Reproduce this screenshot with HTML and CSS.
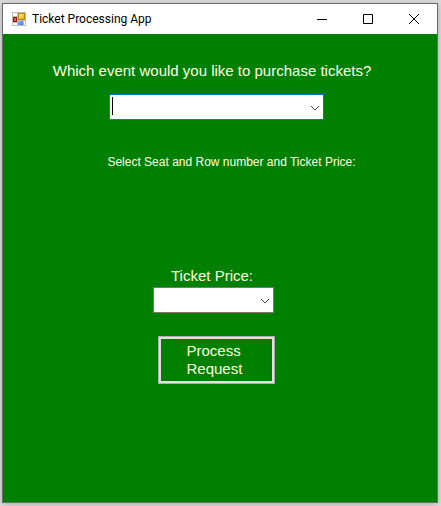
FILE: index.html
```html
<!DOCTYPE html>
<html lang="en">
<head>
<meta charset="utf-8">
<title>Ticket Processing App</title>
<link rel="stylesheet" href="styles.css">
</head>
<body>
<div class="window">
  <header class="titlebar">
    <svg class="app-icon" viewBox="0 0 14 14" shape-rendering="crispEdges" aria-hidden="true">
      <defs>
        <linearGradient id="gold" x1="0" y1="0" x2="1" y2="1"><stop offset="0" stop-color="#fff0a0"/><stop offset="1" stop-color="#e8a800"/></linearGradient>
        <linearGradient id="blue" x1="0" y1="0" x2="1" y2="1"><stop offset="0" stop-color="#8dbcff"/><stop offset="1" stop-color="#3a78dc"/></linearGradient>
      </defs>
      <path fill="#bdbdbd" d="M0 0h14v14H0z"/>
      <path fill="#fff" d="M1 1h4v3H1zM1 11h4v2H1zM12 9h1v4h-1zM6 9h5v1H6z"/>
      <path fill="#b8860b" d="M6 1h7v7H6z"/>
      <path fill="url(#gold)" d="M7 2h5v5H7z"/>
      <path fill="#a01010" d="M1 5h4v5H1z"/>
      <path fill="#e05a4a" d="M2 6h2v3H2z"/>
      <path fill="url(#blue)" d="M6 9h5v4H6z"/>
    </svg>
    <h1 class="title">Ticket Processing App</h1>
    <div class="controls">
      <button class="control" type="button" aria-label="Minimize"><svg viewBox="0 0 10 10" aria-hidden="true"><path d="M0 5.5h10"/></svg></button>
      <button class="control" type="button" aria-label="Maximize"><svg viewBox="0 0 10 10" aria-hidden="true"><path d="M.5.5h9v9h-9z"/></svg></button>
      <button class="control" type="button" aria-label="Close"><svg viewBox="0 0 10 10" aria-hidden="true"><path d="M0 0l10 10M10 0L0 10"/></svg></button>
    </div>
  </header>
  <form class="form">
    <label class="label event-label" for="event">Which event would you like to purchase tickets?</label>
    <div class="combo combo-event">
      <select id="event"><option></option></select>
      <span class="caret"></span>
      <svg class="chevron" viewBox="0 0 10 6" aria-hidden="true"><path d="M1 1l4 4 4-4"/></svg>
    </div>
    <p class="hint">Select Seat and Row number and Ticket Price:</p>
    <label class="label price-label" for="price">Ticket Price:</label>
    <div class="combo combo-price">
      <select id="price"><option></option></select>
      <svg class="chevron" viewBox="0 0 10 6" aria-hidden="true"><path d="M1 1l4 4 4-4"/></svg>
    </div>
    <button class="submit" type="button">Process Request</button>
  </form>
</div>
</body>
</html>
```
FILE: styles.css
```css
* {
  box-sizing: border-box;
}

body {
  display: flex;
  min-height: 100vh;
  margin: 0;
  padding: 3px 3px 3px 2px;
  background: #dcdcdc;
  font-family: "Liberation Sans", Arial, sans-serif;
}

.window {
  display: flex;
  flex: 1;
  flex-direction: column;
  border: 1px solid #6b6b6b;
  background: #008000;
  box-shadow: 0 1px 6px #aaa;
}

.titlebar {
  display: flex;
  align-items: center;
  height: 30px;
  padding-left: 9px;
  background: #fff;
}

.app-icon {
  width: 14px;
  height: 14px;
}

.title {
  flex: 1;
  margin: 0 0 0 6px;
  color: #000;
  font: 12px/16px Roboto, "Open Sans", sans-serif;
}

.controls {
  display: flex;
  align-self: stretch;
}

.control {
  display: flex;
  align-items: center;
  justify-content: center;
  width: 46px;
  padding: 0;
  border: 0;
  background: none;
}

.control svg {
  width: 10px;
  height: 10px;
  fill: none;
  stroke: #000;
}

.form {
  display: flex;
  flex: 1;
  flex-direction: column;
  align-items: center;
  padding-top: 28px;
  color: #ffffe0;
}

.label {
  font-size: 15px;
  line-height: 18px;
}

.event-label {
  margin-right: 16px;
}

.combo {
  position: relative;
  height: 26px;
}

.combo-event {
  width: 215px;
  margin: 14px 8px 0 0;
}

.combo-price {
  width: 121px;
  margin: 2px 14px 0 0;
}

.combo select {
  display: block;
  width: 100%;
  height: 100%;
  padding: 0 22px 0 4px;
  appearance: none;
  border: 1px solid #7a7a7a;
  border-radius: 0;
  background: #fff;
  font: 15px "Liberation Sans", Arial, sans-serif;
}

.combo-event select {
  border-color: #0078d7;
}

.caret {
  position: absolute;
  top: 3px;
  left: 3px;
  width: 1px;
  height: 18px;
  background: #000;
}

.chevron {
  position: absolute;
  top: 11px;
  right: 4px;
  width: 10px;
  height: 6px;
  fill: none;
  stroke: #444;
  pointer-events: none;
}

.hint {
  margin: 34px 0 0 23px;
  font-size: 12px;
  line-height: 16px;
}

.price-label {
  margin: 97px 16px 0 0;
}

.submit {
  width: 117px;
  margin: 23px 8px 0 0;
  padding: 3px 26px;
  border: 3px solid #e1e1e1;
  outline: 1px solid #adadad;
  outline-offset: -1px;
  background: #008000;
  color: #ffffe0;
  font: 15px/18px "Liberation Sans", Arial, sans-serif;
  text-align: left;
}
```
